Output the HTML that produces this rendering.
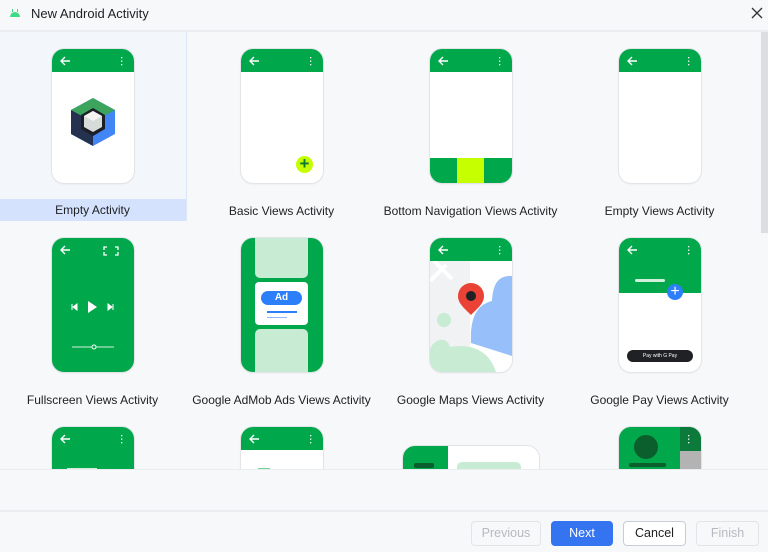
<!DOCTYPE html>
<html><head><meta charset="utf-8"><style>
*{box-sizing:border-box;margin:0;padding:0}
html,body{width:768px;height:552px;overflow:hidden}
body{background:#f7f8fa;font-family:"Liberation Sans",sans-serif;position:relative;color:#1e1f22}
.a{position:absolute}
.title{left:31px;top:6px;font-size:13px}
.ph{position:absolute;width:82px;height:134px;border-radius:12px;background:#fff;overflow:hidden;box-shadow:0 0 0 1px #e3e4e8,0 1px 2px rgba(0,0,0,.08)}
.hd{position:absolute;left:0;top:0;width:100%;height:23px;background:#00a84b}
.lbl{position:absolute;width:189px;text-align:center;font-size:12px;color:#1e1f22}
.btn{position:absolute;top:521px;height:25px;border-radius:4px;font-size:12.5px;text-align:center;line-height:23px}
#clip{position:absolute;left:0;top:0;width:768px;height:469px;overflow:hidden}
</style></head><body>
<div id="clip">
<svg class="a" style="left:9px;top:9px" width="12" height="8" viewBox="0 0 12 8"><path d="M1 8 A5 5 0 0 1 11 8Z" fill="#3ddc84"/><rect x="3" y="0" width="1" height="3" fill="#3ddc84"/><rect x="8" y="0" width="1" height="3" fill="#3ddc84"/></svg>
<div class="a title">New Android Activity</div>
<svg class="a" style="left:751px;top:7px" width="12" height="12" viewBox="0 0 12 12"><path d="M1 1L11 11M11 1L1 11" stroke="#333" stroke-width="1.3"/></svg>
<div class="a" style="left:0;top:30px;width:768px;height:2px;background:#ebecf0"></div>
<div class="a" style="left:761px;top:32px;width:7px;height:201px;background:#dcdde0"></div>

<div class="a" style="left:0;top:32px;width:187px;height:189px;background:#f3f6fb;border-right:1px solid #dde6f7"></div>
<div class="a" style="left:0;top:199px;width:186px;height:22px;background:#d4e2fd"></div>

<div class="ph" style="left:52px;top:49px"><div class="hd"></div>
<svg class="a" style="left:15px;top:47px" width="52" height="52" viewBox="0 0 52 52"><path d="M26 2 L48 14 L48 38 L26 50 L4 38 L4 14Z" fill="#4285f4"/><path d="M26 2 L48 14 L26 26 L4 14Z" fill="#3ca45c"/><path d="M4 14 L26 26 L26 50 L4 38Z" fill="#24324f"/><path d="M26 12 L38 19 L38 33 L26 40 L14 33 L14 19Z" fill="#1c1f26"/><path d="M26 15 L35 20 L35 31 L26 36 L17 31 L17 20Z" fill="#d8dcd8"/><path d="M26 15 L35 20 L26 25 L17 20Z" fill="#f4f4f2"/></svg></div>
<div class="ph" style="left:241px;top:49px"><div class="hd"></div><div class="a" style="left:55px;top:107px;width:17px;height:17px;border-radius:50%;background:#c6ff00;color:#0a7a30;font-size:17px;line-height:16px;text-align:center;font-weight:bold">+</div></div>
<div class="ph" style="left:430px;top:49px"><div class="hd"></div><div class="a" style="left:0;top:109px;width:27px;height:25px;background:#00a84b"></div><div class="a" style="left:27px;top:109px;width:27px;height:25px;background:#c6ff00"></div><div class="a" style="left:54px;top:109px;width:28px;height:25px;background:#00a84b"></div></div>
<div class="ph" style="left:619px;top:49px"><div class="hd"></div></div>
<div class="lbl" style="left:-2px;top:203px">Empty Activity</div>
<div class="lbl" style="left:187px;top:204px">Basic Views Activity</div>
<div class="lbl" style="left:376px;top:204px">Bottom Navigation Views Activity</div>
<div class="lbl" style="left:565px;top:204px">Empty Views Activity</div>

<div class="ph" style="left:52px;top:238px;background:#00a84b">
<svg class="a" style="left:0;top:0" width="82" height="134" viewBox="0 0 82 134"><path d="M55 9h-3v3M63 9h3v3M55 17h-3v-3M63 17h3v-3" stroke="#fff" stroke-width="1.3" fill="none"/><path d="M20 66v6M21 69l4-3v6z" stroke="#fff" fill="#fff" stroke-width="1"/><path d="M36 63v12l9-6z" fill="#fff"/><path d="M61 66v6M60 69l-4-3v6z" stroke="#fff" fill="#fff"/><path d="M20 109h42" stroke="#d0f0dc" stroke-width="1"/><circle cx="42" cy="109" r="2" fill="#00a84b" stroke="#fff" stroke-width="1"/></svg></div>
<div class="ph" style="left:241px;top:238px;background:#00a84b">
<div class="a" style="left:14px;top:0;width:53px;height:40px;background:#c8ebd4;border-radius:0 0 5px 5px"></div>
<div class="a" style="left:14px;top:44px;width:53px;height:43px;background:#fff;border-radius:4px"></div>
<div class="a" style="left:20px;top:53px;width:41px;height:14px;background:#2d7ff9;border-radius:7px;color:#fff;font-size:10px;font-weight:bold;text-align:center;line-height:14px">Ad</div>
<div class="a" style="left:26px;top:73px;width:30px;height:1.5px;background:#2d7ff9"></div>
<div class="a" style="left:26px;top:79px;width:20px;height:1px;background:#8fb8fb"></div>
<div class="a" style="left:14px;top:91px;width:53px;height:43px;background:#c8ebd4;border-radius:5px 5px 0 0"></div></div>
<div class="ph" style="left:430px;top:238px">
<div class="a" style="left:0;top:23px;width:40px;height:111px;background:#f1f2f3"></div>
<svg class="a" style="left:0;top:23px" width="82" height="111" viewBox="0 0 82 111"><path d="M0 20 L16 4 M4 0 L22 18" stroke="#fff" stroke-width="4"/><path d="M82 15 C66 14 63 26 62 40 C45 44 40 60 41 82 L82 95Z" fill="#97bff9"/><circle cx="14" cy="59" r="7" fill="#c8ebd4"/><path d="M0 88 C5 76 18 76 20 86 C45 82 60 92 66 111 L0 111Z" fill="#c8ebd4"/><path d="M41 54 C33 46 28 42 28 35 A13 13 0 0 1 54 35 C54 42 49 46 41 54Z" fill="#ea4335"/><circle cx="41" cy="35" r="5" fill="#202124"/></svg>
<div class="hd"></div></div>
<div class="ph" style="left:619px;top:238px"><div class="a" style="left:0;top:0;width:82px;height:55px;background:#00a84b"></div>
<div class="a" style="left:16px;top:41px;width:30px;height:3px;border-radius:2px;background:#d0f0dc"></div>
<div class="a" style="left:48px;top:46px;width:16px;height:16px;border-radius:50%;background:#2d7ff9;color:#fff;font-size:16px;line-height:15px;text-align:center">+</div>
<div class="a" style="left:8px;top:112px;width:66px;height:12px;border-radius:6px;background:#202124;color:#fff;font-size:5px;line-height:12px;text-align:center">Pay with G Pay</div></div>
<div class="lbl" style="left:-2px;top:393px">Fullscreen Views Activity</div>
<div class="lbl" style="left:187px;top:393px">Google AdMob Ads Views Activity</div>
<div class="lbl" style="left:376px;top:393px">Google Maps Views Activity</div>
<div class="lbl" style="left:565px;top:393px">Google Pay Views Activity</div>

<div class="ph" style="left:52px;top:427px;background:#00a84b"><div class="a" style="left:15px;top:41px;width:30px;height:4px;background:#d0f0dc"></div></div>
<div class="ph" style="left:241px;top:427px"><div class="hd"></div><div class="a" style="left:17px;top:41px;width:12px;height:4px;background:#6cd08f"></div></div>
<div class="ph" style="left:403px;top:446px;width:136px;height:80px"><div class="a" style="left:0;top:0;width:45px;height:80px;background:#00a84b"></div><div class="a" style="left:11px;top:17px;width:20px;height:5px;border-radius:2px;background:#0b5f2c"></div><div class="a" style="left:54px;top:16px;width:64px;height:20px;border-radius:5px;background:#c8ebd4"></div></div>
<div class="ph" style="left:619px;top:427px;background:#00a84b"><div class="a" style="left:61px;top:0;width:21px;height:24px;background:#0b7a3a"></div><div class="a" style="left:61px;top:24px;width:21px;height:110px;background:#b3b3b3"></div><div class="a" style="left:15px;top:8px;width:24px;height:24px;border-radius:50%;background:#0b5f2c"></div><div class="a" style="left:10px;top:36px;width:37px;height:4px;border-radius:2px;background:#0b5f2c"></div></div>

<svg class="a" style="left:0;top:0" width="768" height="470" viewBox="0 0 768 470">
<g stroke="#fff" stroke-width="1.4" fill="none">
<path d="M61 61h9M65 57l-4 4 4 4"/><path d="M250 61h9M254 57l-4 4 4 4"/><path d="M439 61h9M443 57l-4 4 4 4"/><path d="M628 61h9M632 57l-4 4 4 4"/>
<path d="M61 250h9M65 246l-4 4 4 4"/><path d="M439 250h9M443 246l-4 4 4 4"/><path d="M628 250h9M632 246l-4 4 4 4"/>
<path d="M61 439h9M65 435l-4 4 4 4"/><path d="M250 439h9M254 435l-4 4 4 4"/>
</g>
<g fill="#fff">
<rect x="121" y="57" width="1.3" height="1.3"/><rect x="121" y="60.5" width="1.3" height="1.3"/><rect x="121" y="64" width="1.3" height="1.3"/>
<rect x="310" y="57" width="1.3" height="1.3"/><rect x="310" y="60.5" width="1.3" height="1.3"/><rect x="310" y="64" width="1.3" height="1.3"/>
<rect x="499" y="57" width="1.3" height="1.3"/><rect x="499" y="60.5" width="1.3" height="1.3"/><rect x="499" y="64" width="1.3" height="1.3"/>
<rect x="688" y="57" width="1.3" height="1.3"/><rect x="688" y="60.5" width="1.3" height="1.3"/><rect x="688" y="64" width="1.3" height="1.3"/>
<rect x="499" y="246" width="1.3" height="1.3"/><rect x="499" y="249.5" width="1.3" height="1.3"/><rect x="499" y="253" width="1.3" height="1.3"/>
<rect x="688" y="246" width="1.3" height="1.3"/><rect x="688" y="249.5" width="1.3" height="1.3"/><rect x="688" y="253" width="1.3" height="1.3"/>
<rect x="121" y="435" width="1.3" height="1.3"/><rect x="121" y="438.5" width="1.3" height="1.3"/><rect x="121" y="442" width="1.3" height="1.3"/>
<rect x="310" y="435" width="1.3" height="1.3"/><rect x="310" y="438.5" width="1.3" height="1.3"/><rect x="310" y="442" width="1.3" height="1.3"/>
<rect x="688" y="435" width="1.3" height="1.3"/><rect x="688" y="438.5" width="1.3" height="1.3"/><rect x="688" y="442" width="1.3" height="1.3"/>
</g></svg>
</div>

<div class="a" style="left:0;top:469px;width:768px;height:83px;background:#f7f8fa;border-top:1px solid #ebecf0"></div>
<div class="a" style="left:0;top:510px;width:768px;height:2px;background:#ebecf0"></div>
<div class="btn" style="left:471px;width:70px;border:1px solid #e3e4e8;color:#b6b9c0">Previous</div>
<div class="btn" style="left:551px;width:62px;background:#3574f0;color:#fff;border:1px solid #3574f0">Next</div>
<div class="btn" style="left:623px;width:63px;border:1px solid #c9ccd6;background:#fff;color:#1e1f22">Cancel</div>
<div class="btn" style="left:696px;width:63px;border:1px solid #e3e4e8;color:#b6b9c0">Finish</div>
</body></html>
